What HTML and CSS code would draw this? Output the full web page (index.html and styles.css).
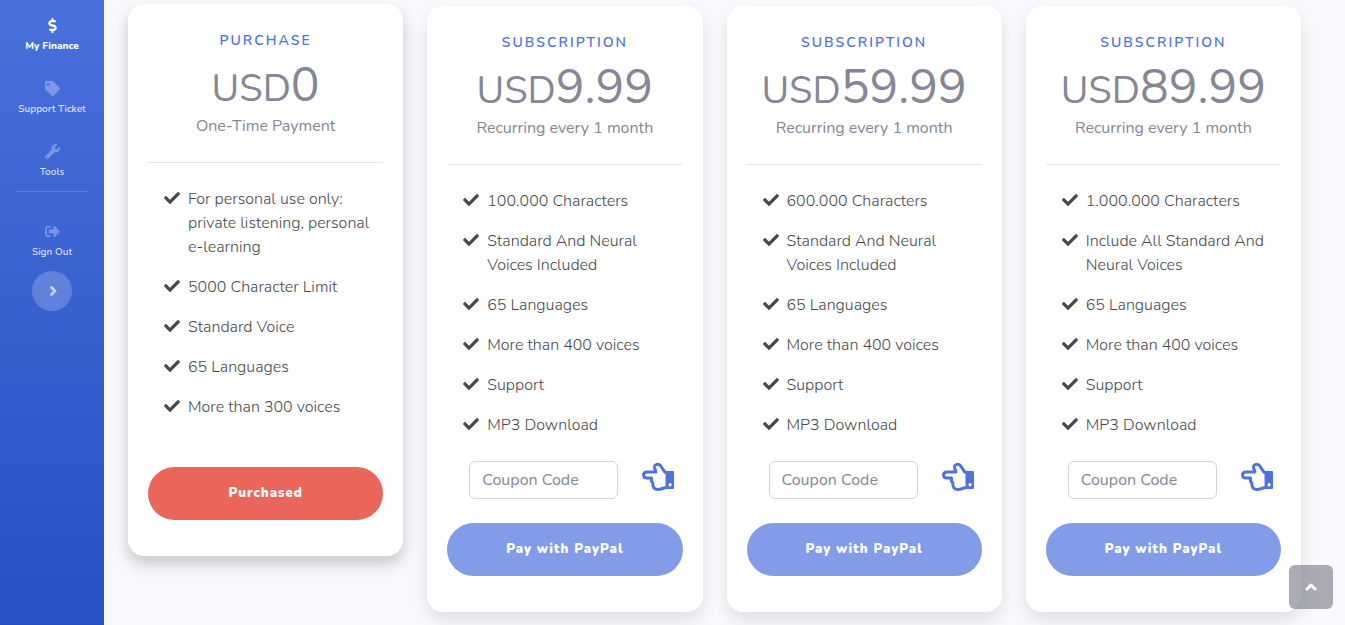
FILE: index.html
```html
<!DOCTYPE html>
<html lang="en">
<head>
    <meta charset="utf-8">
    <meta name="viewport" content="width=device-width, initial-scale=1">
    <title>My Finance</title>
    <link rel="stylesheet" href="styles.css">
</head>
<body>
    <!-- Shared icons -->
    <svg class="sprite" aria-hidden="true">
        <symbol id="check" viewBox="0 0 512 512">
            <path d="M173.898 439.404l-166.4-166.4c-9.997-9.997-9.997-26.206 0-36.204l36.203-36.204c9.997-9.998 26.207-9.998 36.204 0L192 312.69 432.095 72.596c9.997-9.997 26.207-9.997 36.204 0l36.203 36.204c9.997 9.997 9.997 26.206 0 36.204l-294.4 294.401c-9.998 9.997-26.207 9.997-36.204-.001z"/>
        </symbol>
        <symbol id="hand" viewBox="0 0 32 32">
            <path d="M14 11H5C.4 11 .4 17 5 17H9.500C9 19.500 9.500 21 10.800 22C10.500 26.500 12.500 28.500 16 28.500C20 28.500 21 26.500 25 26.500V12.500C21.500 11 20.800 8 19 5.200C17 2 12 3 12.600 6.800C13 8.500 13.800 9.500 14 11Z" fill="none" stroke="currentColor" stroke-width="3" stroke-linejoin="round"/>
            <path fill-rule="evenodd" d="M25 10h6a1 1 0 0 1 1 1v16a1 1 0 0 1-1 1h-6a1 1 0 0 1-1-1v-16a1 1 0 0 1 1-1zM28 22a1.700 1.700 0 1 0 0 3.400 1.700 1.700 0 0 0 0-3.400z"/>
        </symbol>
    </svg>

    <div class="wrapper">
        <!-- Sidebar -->
        <nav class="sidebar">
            <a class="nav-link active" href="#">
                <svg viewBox="0 0 288 512"><path d="M209.2 233.4l-108-31.6C88.7 198.2 80 186.5 80 173.5c0-16.3 13.2-29.5 29.5-29.5h66.3c12.2 0 24.2 3.7 34.2 10.5 6.1 4.1 14.3 3.1 19.5-2l34.8-34c7.1-6.9 6.1-18.4-1.8-24.5C238 74.8 207.4 64.1 176 64V16c0-8.8-7.2-16-16-16h-32c-8.8 0-16 7.2-16 16v48h-2.500C45.8 64-5.4 118.7.5 183.6c4.2 46.1 39.4 83.6 83.8 96.6l102.500 30c12.500 3.7 21.2 15.3 21.2 28.3 0 16.3-13.2 29.500-29.500 29.500h-66.300C100 368 88 364.3 78 357.5c-6.1-4.1-14.3-3.1-19.5 2l-34.8 34c-7.1 6.9-6.1 18.4 1.8 24.5 24.5 19.2 55.1 29.9 86.5 30v48c0 8.8 7.2 16 16 16h32c8.8 0 16-7.2 16-16v-48.2c46.6-.9 90.3-28.6 105.7-72.7 21.5-61.6-14.6-124.8-72.500-141.700z"/></svg>
                <span>My Finance</span>
            </a>
            <a class="nav-link" href="#">
                <svg viewBox="0 0 512 512"><path d="M0 252.118V48C0 21.49 21.49 0 48 0h204.118a48 48 0 0 1 33.941 14.059l211.882 211.882c18.745 18.745 18.745 49.137 0 67.882L293.823 497.941c-18.745 18.745-49.137 18.745-67.882 0L14.059 286.059A48 48 0 0 1 0 252.118zM112 64c-26.51 0-48 21.49-48 48s21.49 48 48 48 48-21.49 48-48-21.49-48-48-48z"/></svg>
                <span>Support Ticket</span>
            </a>
            <a class="nav-link" href="#">
                <svg viewBox="0 0 512 512"><path d="M507.73 109.1c-2.24-9.03-13.54-12.09-20.12-5.51l-74.36 74.36-67.88-11.31-11.31-67.88 74.36-74.36c6.62-6.62 3.43-17.9-5.66-20.16-47.38-11.74-99.55.91-136.58 37.93-39.64 39.64-50.55 97.1-34.05 147.2L18.74 402.76c-24.99 24.99-24.99 65.51 0 90.5 24.99 24.99 65.51 24.99 90.5 0l213.21-213.21c50.12 16.71 107.47 5.68 147.37-34.22 37.07-37.07 49.7-89.32 37.91-136.73zM64 472c-13.25 0-24-10.75-24-24 0-13.26 10.75-24 24-24s24 10.74 24 24c0 13.25-10.75 24-24 24z"/></svg>
                <span>Tools</span>
            </a>
            <hr class="sidebar-divider">
            <a class="nav-link" href="#">
                <svg viewBox="0 0 512 512"><path d="M497 273L329 441c-15 15-41 4.500-41-17v-96H152c-13.300 0-24-10.700-24-24v-96c0-13.300 10.700-24 24-24h136V88c0-21.400 25.900-32 41-17l168 168c9.300 9.400 9.300 24.600 0 34zM192 436v-40c0-6.600-5.400-12-12-12H96c-17.700 0-32-14.300-32-32V160c0-17.700 14.300-32 32-32h84c6.600 0 12-5.400 12-12V76c0-6.600-5.400-12-12-12H96c-53 0-96 43-96 96v192c0 53 43 96 96 96h84c6.600 0 12-5.400 12-12z"/></svg>
                <span>Sign Out</span>
            </a>
            <button class="sidebar-toggle" type="button" aria-label="Toggle sidebar">
                <svg viewBox="0 0 16 16"><path d="M7.500 4.500l3.500 3.500-3.500 3.500"/></svg>
            </button>
        </nav>

        <!-- Pricing plans -->
        <main class="plans">
            <section class="card card-raised">
                <h2 class="plan-type">Purchase</h2>
                <p class="price"><span class="currency">USD</span>0</p>
                <p class="period">One-Time Payment</p>
                <hr class="card-divider">
                <ul class="features">
                    <li><svg><use href="#check"/></svg><span>For personal use only: private listening, personal e-learning</span></li>
                    <li><svg><use href="#check"/></svg><span>5000 Character Limit</span></li>
                    <li><svg><use href="#check"/></svg><span>Standard Voice</span></li>
                    <li><svg><use href="#check"/></svg><span>65 Languages</span></li>
                    <li><svg><use href="#check"/></svg><span>More than 300 voices</span></li>
                </ul>
                <button class="btn btn-purchased" type="button">Purchased</button>
            </section>

            <section class="card">
                <h2 class="plan-type">Subscription</h2>
                <p class="price"><span class="currency">USD</span>9.99</p>
                <p class="period">Recurring every 1 month</p>
                <hr class="card-divider">
                <ul class="features">
                    <li><svg><use href="#check"/></svg><span>100.000 Characters</span></li>
                    <li><svg><use href="#check"/></svg><span>Standard And Neural Voices Included</span></li>
                    <li><svg><use href="#check"/></svg><span>65 Languages</span></li>
                    <li><svg><use href="#check"/></svg><span>More than 400 voices</span></li>
                    <li><svg><use href="#check"/></svg><span>Support</span></li>
                    <li><svg><use href="#check"/></svg><span>MP3 Download</span></li>
                </ul>
                <div class="coupon">
                    <input type="text" placeholder="Coupon Code" aria-label="Coupon Code">
                    <svg><use href="#hand"/></svg>
                </div>
                <button class="btn" type="button">Pay with PayPal</button>
            </section>

            <section class="card">
                <h2 class="plan-type">Subscription</h2>
                <p class="price"><span class="currency">USD</span>59.99</p>
                <p class="period">Recurring every 1 month</p>
                <hr class="card-divider">
                <ul class="features">
                    <li><svg><use href="#check"/></svg><span>600.000 Characters</span></li>
                    <li><svg><use href="#check"/></svg><span>Standard And Neural Voices Included</span></li>
                    <li><svg><use href="#check"/></svg><span>65 Languages</span></li>
                    <li><svg><use href="#check"/></svg><span>More than 400 voices</span></li>
                    <li><svg><use href="#check"/></svg><span>Support</span></li>
                    <li><svg><use href="#check"/></svg><span>MP3 Download</span></li>
                </ul>
                <div class="coupon">
                    <input type="text" placeholder="Coupon Code" aria-label="Coupon Code">
                    <svg><use href="#hand"/></svg>
                </div>
                <button class="btn" type="button">Pay with PayPal</button>
            </section>

            <section class="card">
                <h2 class="plan-type">Subscription</h2>
                <p class="price"><span class="currency">USD</span>89.99</p>
                <p class="period">Recurring every 1 month</p>
                <hr class="card-divider">
                <ul class="features">
                    <li><svg><use href="#check"/></svg><span>1.000.000 Characters</span></li>
                    <li><svg><use href="#check"/></svg><span>Include All Standard And Neural Voices</span></li>
                    <li><svg><use href="#check"/></svg><span>65 Languages</span></li>
                    <li><svg><use href="#check"/></svg><span>More than 400 voices</span></li>
                    <li><svg><use href="#check"/></svg><span>Support</span></li>
                    <li><svg><use href="#check"/></svg><span>MP3 Download</span></li>
                </ul>
                <div class="coupon">
                    <input type="text" placeholder="Coupon Code" aria-label="Coupon Code">
                    <svg><use href="#hand"/></svg>
                </div>
                <button class="btn" type="button">Pay with PayPal</button>
            </section>
        </main>
    </div>

    <a class="scroll-top" href="#" aria-label="Back to top">
        <svg viewBox="0 0 16 16"><path d="M4 10l4-4 4 4"/></svg>
    </a>
</body>
</html>
```
FILE: styles.css
```css
* {
    box-sizing: border-box;
}

body {
    margin: 0;
    font-family: Nunito, "Open Sans", sans-serif;
    font-size: 16px;
    line-height: 24px;
    color: #858796;
    background-color: #f8f9fc;
}

svg {
    fill: currentColor;
}

.sprite {
    display: none;
}

.wrapper {
    display: flex;
    min-height: 100vh;
}

/* Sidebar */
.sidebar {
    flex: 0 0 104px;
    display: flex;
    flex-direction: column;
    align-items: center;
    padding-top: 6px;
    background: linear-gradient(180deg, #4a70dc, #2750c2);
}

.nav-link {
    display: flex;
    flex-direction: column;
    align-items: center;
    gap: 5px;
    width: 100%;
    height: 63px;
    padding-top: 12px;
    font-size: 10px;
    font-weight: 600;
    line-height: 16px;
    color: rgba(255, 255, 255, 0.8);
    text-decoration: none;
}

.nav-link svg {
    width: 15px;
    height: 15px;
    color: rgba(255, 255, 255, 0.3);
}

.nav-link.active {
    font-weight: 800;
    color: #fff;
}

.nav-link.active svg {
    color: #fff;
}

.sidebar-divider {
    width: 72px;
    margin: -4px 0 20px;
    border: 0;
    border-top: 1px solid rgba(255, 255, 255, 0.15);
}

.sidebar-toggle {
    display: flex;
    align-items: center;
    justify-content: center;
    width: 40px;
    height: 40px;
    margin-top: -4px;
    padding: 0;
    border: 0;
    border-radius: 50%;
    color: rgba(255, 255, 255, 0.6);
    background-color: rgba(255, 255, 255, 0.2);
    cursor: pointer;
}

.sidebar-toggle svg,
.scroll-top svg {
    width: 16px;
    height: 16px;
    fill: none;
    stroke: currentColor;
    stroke-width: 3;
    stroke-linecap: round;
    stroke-linejoin: round;
}

/* Plans */
.plans {
    flex: 1;
    display: grid;
    grid-template-columns: repeat(4, minmax(0, 1fr));
    align-items: start;
    gap: 24px;
    padding: 6px 44px 13px 24px;
}

.card {
    padding: 25px 20px 36px;
    border-radius: 16px;
    background-color: #fff;
    box-shadow: 0 8px 16px rgba(0, 0, 0, 0.1);
}

.card-raised {
    margin-top: -2px;
    box-shadow: 0 8px 16px rgba(0, 0, 0, 0.2);
}

.plan-type {
    margin: 0;
    font-size: 14px;
    font-weight: 600;
    line-height: 24px;
    letter-spacing: 2px;
    text-align: center;
    text-transform: uppercase;
    color: #4e73df;
}

.price {
    margin: 7px 0 4px;
    font-size: 48px;
    line-height: 50px;
    text-align: center;
}

.currency {
    font-size: 38px;
    line-height: 38px;
}

.period {
    margin: 0;
    text-align: center;
}

.card-divider {
    margin: 24px 0;
    border: 0;
    border-top: 1px solid #e5e5e8;
}

.features {
    margin: 0;
    padding: 0 0 0 16px;
    list-style: none;
    font-weight: 300;
    color: #48484b;
}

.features li {
    display: flex;
    gap: 8px;
    margin-bottom: 16px;
}

.features svg {
    flex: none;
    width: 16px;
    height: 16px;
    margin-top: 3px;
}

.coupon {
    display: flex;
    align-items: flex-start;
    gap: 24px;
    margin: 24px 0;
    padding-left: 22px;
}

.coupon input {
    width: 149px;
    height: 38px;
    padding: 6px 12px;
    border: 1px solid #d1d3e2;
    border-radius: 6px;
    font: inherit;
    background-color: #fff;
}

.coupon input::placeholder {
    color: #858796;
    opacity: 1;
}

.coupon svg {
    width: 32px;
    height: 32px;
    color: #4e73df;
}

/* Buttons */
.btn {
    display: block;
    width: 100%;
    height: 53px;
    padding: 0 0 2px;
    border: 0;
    border-radius: 27px;
    font-family: inherit;
    font-size: 13px;
    font-weight: 900;
    letter-spacing: 1px;
    color: #fff;
    background-color: #839ce8;
    cursor: pointer;
}

.btn-purchased {
    margin-top: 48px;
    background-color: #ea665b;
}

.scroll-top {
    position: fixed;
    right: 12px;
    bottom: 16px;
    display: flex;
    align-items: center;
    justify-content: center;
    width: 44px;
    height: 44px;
    border-radius: 6px;
    color: #fff;
    background-color: rgba(90, 92, 105, 0.5);
}
```
